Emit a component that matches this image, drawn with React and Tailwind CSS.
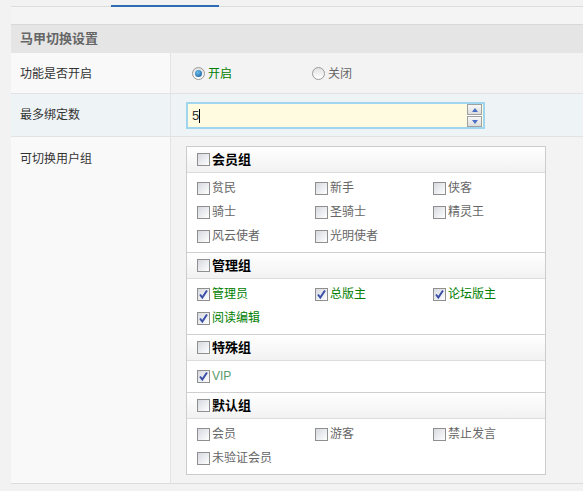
import React from 'react';

const FONT = { fontFamily: '"Liberation Sans", "Noto Sans CJK SC", sans-serif' };

const groups = [
  { name: '会员组', items: [['贫民'], ['新手'], ['侠客'], ['骑士'], ['圣骑士'], ['精灵王'], ['风云使者'], ['光明使者']] },
  { name: '管理组', items: [['管理员', 1], ['总版主', 1], ['论坛版主', 1], ['阅读编辑', 1]] },
  { name: '特殊组', items: [['VIP', 2]] },
  { name: '默认组', items: [['会员'], ['游客'], ['禁止发言'], ['未验证会员']] },
];

const Box = ({ checked }) => (
  <span className="relative inline-block w-[13px] h-[13px] border border-[#8f8f8f] bg-gradient-to-br from-[#d6d9e0] to-white shrink-0">
    {checked && (
      <svg className="absolute left-0 top-0" width="11" height="11" viewBox="0 0 11 11">
        <path d="M2 5.5 L4.3 8.5 L9 1.5" fill="none" stroke="#3b4fa8" strokeWidth="2" />
      </svg>
    )}
  </span>
);

const Radio = ({ on }) => (
  <span className="inline-flex items-center justify-center w-[13px] h-[13px] rounded-full border border-[#9a9a9a] bg-gradient-to-b from-[#e2e2e2] to-white">
    {on && <span className="w-[7px] h-[7px] rounded-full bg-[radial-gradient(circle_at_40%_35%,#6fc0f0,#0a4f8f)]" />}
  </span>
);

export default function App() {
  return (
    <div className="w-[583px] h-[491px] overflow-hidden bg-[#f2f2f2] text-[12px]" style={FONT}>
      <div className="h-[6px] flex">
        <div className="w-[111px]" />
        <div className="w-[108px] h-[2px] mt-[5px] bg-[#2d6cb5]" />
      </div>
      <div className="ml-[11px] h-[2px] border-t border-[#dcdcdc] bg-[#f5f5f5]" />
      <div className="ml-[11px] h-[16px] bg-[#f4f4f4]" />
      <div className="ml-[11px]">
        <div className="h-[29px] border-t border-[#d8d8d8] bg-[#e5e5e5] flex items-center pl-[9px] font-bold text-[13px] text-[#666]">
          马甲切换设置
        </div>
        <div className="flex h-[41px] border-b border-[#e2e2e2]">
          <div className="w-[160px] bg-[#f9f9f9] border-r border-[#e4e4e4] pl-[9px] pt-[12px] text-[#333]">功能是否开启</div>
          <div className="flex-1 bg-[#f3f3f3] flex items-center pl-[21px] pt-[1px]">
            <label className="flex items-center gap-[3px] text-[#008000] w-[120px]"><Radio on />开启</label>
            <label className="flex items-center gap-[3px] text-[#666]"><Radio />关闭</label>
          </div>
        </div>
        <div className="flex h-[43px] border-b border-[#e2e2e2] bg-[#eef3f6]">
          <div className="w-[160px] border-r border-[#e4e4e4] pl-[9px] pt-[12px] text-[#333]">最多绑定数</div>
          <div className="flex-1 pl-[15px] pt-[8px]">
            <div className="w-[299px] h-[27px] border-2 border-[#9fd5ee] bg-[#fffbe0] flex items-center">
              <span className="pl-[4px] text-[13px] text-[#333] flex-1">5<span className="inline-block w-px h-[14px] bg-black align-middle" /></span>
              <div className="flex flex-col gap-[1px] mr-[1px] bg-white">
                <span className="w-[15px] h-[11px] border border-[#a0a0a0] bg-gradient-to-b from-[#f8f8f8] to-[#dcdcdc] flex items-center justify-center">
                  <span className="w-0 h-0 border-l-[3px] border-r-[3px] border-b-[4px] border-l-transparent border-r-transparent border-b-[#4a6ec2]" />
                </span>
                <span className="w-[15px] h-[11px] border border-[#a0a0a0] bg-gradient-to-b from-[#f8f8f8] to-[#dcdcdc] flex items-center justify-center">
                  <span className="w-0 h-0 border-l-[3px] border-r-[3px] border-t-[4px] border-l-transparent border-r-transparent border-t-[#4a6ec2]" />
                </span>
              </div>
            </div>
          </div>
        </div>
        <div className="flex h-[347px] border-b border-[#dcdcdc]">
          <div className="w-[160px] bg-[#f9f9f9] border-r border-[#e4e4e4] pl-[9px] pt-[13px] text-[#333]">可切换用户组</div>
          <div className="flex-1 bg-[#f3f3f3] pl-[15px] pt-[9px]">
            <div className="w-[360px] border border-[#cccccc] bg-white">
              {groups.map((g, gi) => (
                <div key={g.name} className={gi > 0 ? 'border-t border-[#cfcfcf]' : ''}>
                  <div className="h-[26px] border-b border-[#dcdcdc] bg-gradient-to-b from-white to-[#f2f2f2] flex items-center pl-[10px] gap-[2px] font-bold text-[13px] text-black">
                    <Box />{g.name}
                  </div>
                  <div className="grid grid-cols-[118px_118px_118px] pl-[10px] pt-[3px] pb-[4px]">
                    {g.items.map(([t, c]) => (
                      <div key={t} className={`h-[24px] flex items-center gap-[2px] ${c === 1 ? 'text-[#008000]' : c === 2 ? 'text-[#5a9a6a]' : 'text-[#666]'}`}>
                        <Box checked={!!c} />{t}
                      </div>
                    ))}
                  </div>
                </div>
              ))}
            </div>
          </div>
        </div>
      </div>
    </div>
  );
}
